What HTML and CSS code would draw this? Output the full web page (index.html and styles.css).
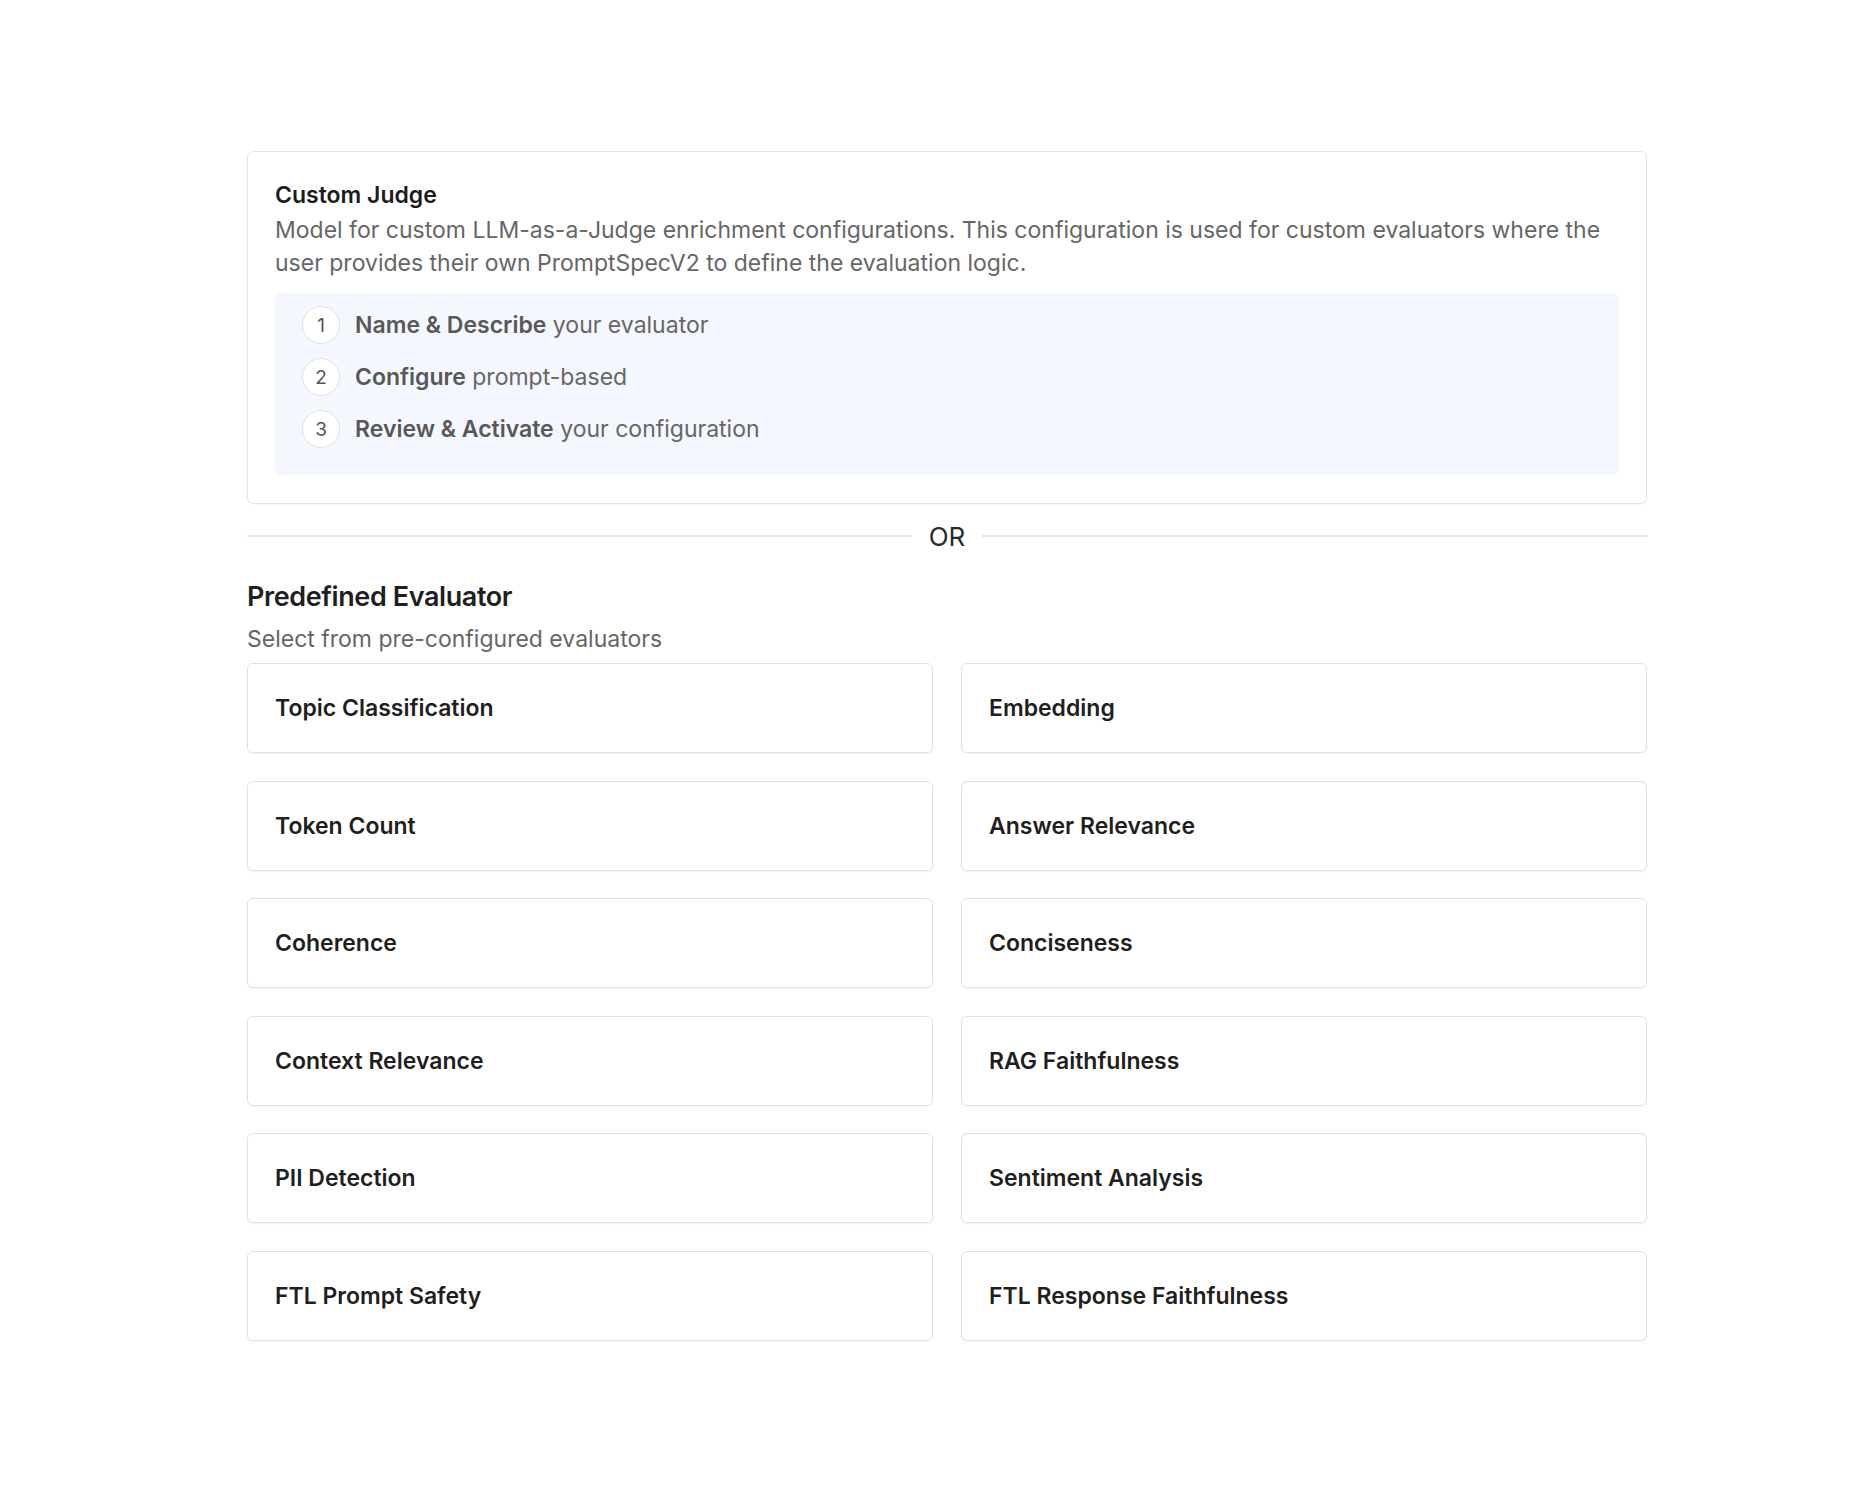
FILE: index.html
```html
<!DOCTYPE html>
<html lang="en">
<head>
    <meta charset="UTF-8">
    <meta name="viewport" content="width=device-width, initial-scale=1.0">
    <title>Choose Evaluator</title>
    <link rel="stylesheet" href="styles.css">
</head>
<body>
    <div class="wrapper">
        <!-- Custom judge option -->
        <div class="judge-card">
            <h2 class="judge-title">Custom Judge</h2>
            <p class="judge-desc">Model for custom LLM-as-a-Judge enrichment configurations. This configuration is used for custom evaluators where the user provides their own PromptSpecV2 to define the evaluation logic.</p>
            <div class="steps">
                <div class="step">
                    <span class="step-num">1</span>
                    <span class="step-text"><strong>Name &amp; Describe</strong> your evaluator</span>
                </div>
                <div class="step">
                    <span class="step-num">2</span>
                    <span class="step-text"><strong>Configure</strong> prompt-based</span>
                </div>
                <div class="step">
                    <span class="step-num">3</span>
                    <span class="step-text"><strong>Review &amp; Activate</strong> your configuration</span>
                </div>
            </div>
        </div>

        <div class="divider">
            <span class="divider-line"></span>
            <span class="divider-text">OR</span>
            <span class="divider-line"></span>
        </div>

        <!-- Predefined evaluators -->
        <h2 class="section-title">Predefined Evaluator</h2>
        <p class="section-sub">Select from pre-configured evaluators</p>
        <div class="eval-grid">
            <div class="eval-card">Topic Classification</div>
            <div class="eval-card">Embedding</div>
            <div class="eval-card">Token Count</div>
            <div class="eval-card">Answer Relevance</div>
            <div class="eval-card">Coherence</div>
            <div class="eval-card">Conciseness</div>
            <div class="eval-card">Context Relevance</div>
            <div class="eval-card">RAG Faithfulness</div>
            <div class="eval-card">PII Detection</div>
            <div class="eval-card">Sentiment Analysis</div>
            <div class="eval-card">FTL Prompt Safety</div>
            <div class="eval-card">FTL Response Faithfulness</div>
        </div>
    </div>
</body>
</html>
```

FILE: styles.css
```css
/* General Styles */
body {
    margin: 0;
    font-family: Inter, "Noto Sans", sans-serif;
    background: #ffffff;
    color: #1f1f1f;
    font-size: 23px;
    line-height: 33px;
}
.wrapper {
    width: 1400px;
    margin: 151px 0 0 247px;
    padding-bottom: 150px;
}
h2, p {
    margin: 0;
}

/* Custom judge card */
.judge-card {
    border: 1px solid #e3e3e3;
    border-radius: 7px;
    padding: 27px 27px 28px;
    box-shadow: 0 1px 2px rgba(0, 0, 0, 0.04);
}
.judge-title {
    font-size: 23px;
    font-weight: 600;
    color: #1c1c1c;
    margin-bottom: 2px;
}
.judge-desc {
    color: #666666;
}
.steps {
    margin-top: 13px;
    background: #f4f7fd;
    border-radius: 6px;
    padding: 12px 27px 26px;
    display: flex;
    flex-direction: column;
    gap: 12px;
}
.step {
    display: flex;
    align-items: center;
    gap: 15px;
    height: 40px;
}
.step-num {
    width: 36px;
    height: 36px;
    border: 1.5px solid #e1e1e1;
    border-radius: 50%;
    background: #ffffff;
    display: flex;
    justify-content: center;
    align-items: center;
    font-size: 19px;
    color: #555555;
}
.step-text {
    color: #666666;
}
.step-text strong {
    font-weight: 600;
    color: #585858;
}

/* OR divider */
.divider {
    display: flex;
    align-items: center;
    gap: 17px;
    margin: 15.5px 0 0;
}
.divider-line {
    flex: 1;
    height: 2px;
    background: #e6e6e6;
}
.divider-text {
    color: #2a2a2a;
    font-size: 26px;
}

/* Predefined section */
.section-title {
    margin-top: 25.5px;
    font-size: 27px;
    line-height: 38px;
    letter-spacing: -0.4px;
    font-weight: 600;
    color: #1f1f1f;
}
.section-sub {
    margin-top: 7px;
    color: #666666;
}
.eval-grid {
    margin-top: 7px;
    display: grid;
    grid-template-columns: 1fr 1fr;
    column-gap: 28px;
    row-gap: 27.5px;
}
.eval-card {
    border: 1px solid #e1e1e1;
    border-radius: 6px;
    padding: 28px 27px;
    height: 32px;
    line-height: 32px;
    font-weight: 600;
    color: #1f1f1f;
    box-shadow: 0 1px 2px rgba(0, 0, 0, 0.05);
}
```
